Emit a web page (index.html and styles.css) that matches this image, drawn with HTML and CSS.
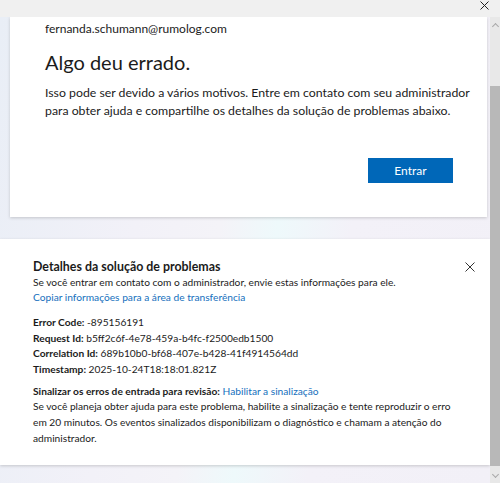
FILE: index.html
```html
<!DOCTYPE html>
<html lang="pt-BR">
<head>
    <meta charset="UTF-8">
    <meta name="viewport" content="width=device-width, initial-scale=1.0">
    <title>Entrar na sua conta</title>
    <link rel="stylesheet" href="styles.css">
</head>
<body>
    <div class="titlebar">
        <span class="win-close">
            <svg width="9" height="9" viewBox="0 0 9 9"><path d="M0.5 0.5 L8.5 8.5 M8.5 0.5 L0.5 8.5" stroke="#222" stroke-width="1" fill="none"/></svg>
        </span>
    </div>
    <div class="frame">
        <div class="viewport">
            <div class="card">
                <div class="identity">fernanda.schumann@rumolog.com</div>
                <h1>Algo deu errado.</h1>
                <p class="message">Isso pode ser devido a vários motivos. Entre em contato com seu administrador para obter ajuda e compartilhe os detalhes da solução de problemas abaixo.</p>
                <div class="actions">
                    <button class="primary-btn">Entrar</button>
                </div>
            </div>

            <div class="details">
                <div class="details-head">
                    <h2>Detalhes da solução de problemas</h2>
                    <button class="close-btn" title="Fechar">
                        <svg width="10" height="10" viewBox="0 0 10 10"><path d="M0.5 0.5 L9.5 9.5 M9.5 0.5 L0.5 9.5" stroke="#333" stroke-width="1" fill="none"/></svg>
                    </button>
                </div>
                <div>Se você entrar em contato com o administrador, envie estas informações para ele.</div>
                <a class="link" href="#">Copiar informações para a área de transferência</a>

                <div class="info">
                    <div><b>Error Code:</b> -895156191</div>
                    <div><b>Request Id:</b> b5ff2c6f-4e78-459a-b4fc-f2500edb1500</div>
                    <div><b>Correlation Id:</b> 689b10b0-bf68-407e-b428-41f4914564dd</div>
                    <div><b>Timestamp:</b> 2025-10-24T18:18:01.821Z</div>
                </div>

                <div class="flagging">
                    <div><b>Sinalizar os erros de entrada para revisão:</b> <a class="link" href="#">Habilitar a sinalização</a></div>
                    <div>Se você planeja obter ajuda para este problema, habilite a sinalização e tente reproduzir o erro em 20 minutos. Os eventos sinalizados disponibilizam o diagnóstico e chamam a atenção do administrador.</div>
                </div>
            </div>
        </div>

        <div class="scrollbar">
            <span class="arrow up"></span>
            <span class="thumb"></span>
            <span class="arrow down"></span>
        </div>
    </div>
</body>
</html>
```

FILE: styles.css
```css
body {
    margin: 0;
    width: 500px;
    height: 483px;
    overflow: hidden;
    font-family: Lato, "Noto Sans", sans-serif;
    color: #1b1b1b;
    background-color: #fff;
}
.titlebar {
    height: 17px;
    background-color: #f0f0f0;
    display: flex;
    justify-content: flex-end;
    align-items: flex-start;
}
.win-close {
    width: 9px;
    height: 9px;
    margin: 1px 11px 0 0;
    display: block;
}
.win-close svg {
    display: block;
}
.frame {
    display: flex;
    height: 466px;
}
.viewport {
    flex: 1;
    overflow: hidden;
    background: linear-gradient(100deg, #e9eef6 0%, #f2f1f8 30%, #f4f3f8 45%, #eef9fb 55%, #f3f1f8 68%, #f2f0f7 100%);
}
.card {
    background-color: #fff;
    margin: 0 3px 0 10px;
    height: 200px;
    box-sizing: border-box;
    padding: 3px 10px 0 35px;
    box-shadow: 0 1px 3px rgba(0, 0, 0, 0.18);
}
.identity {
    font-size: 12px;
    line-height: 18px;
}
h1 {
    font-size: 20px;
    font-weight: 400;
    margin: 11px 0 0;
    line-height: 26px;
}
.message {
    font-size: 12.3px;
    margin: 9px 0 0;
    line-height: 17.5px;
    text-wrap: balance;
}
.actions {
    display: flex;
    justify-content: flex-end;
    margin-top: 39px;
}
.primary-btn {
    background-color: #0067b8;
    color: #fff;
    border: none;
    width: 85px;
    height: 25px;
    font-family: inherit;
    font-size: 12px;
    padding: 0;
    margin-right: 24px;
}
.details {
    background-color: #fff;
    margin-top: 22px;
    height: 226px;
    box-sizing: border-box;
    padding: 20px 25px 0 33px;
    box-shadow: 0 1px 3px rgba(0, 0, 0, 0.18);
    font-size: 10.2px;
    line-height: 15.7px;
}
.details-head {
    display: flex;
    justify-content: space-between;
    align-items: center;
}
h2 {
    font-size: 12.4px;
    font-weight: 700;
    margin: 0;
    line-height: 15.5px;
}
.close-btn {
    background: none;
    border: none;
    padding: 0;
    width: 10px;
    height: 10px;
    margin-right: -10px;
}
.close-btn svg {
    display: block;
}
.link {
    color: #1570bd;
    text-decoration: none;
    display: inline-block;
}
.info {
    margin-top: 9px;
}
b {
    font-weight: 700;
}
.flagging {
    margin-top: 6px;
}
.scrollbar {
    width: 10px;
    background-color: #e8e8e8;
    display: flex;
    flex-direction: column;
    align-items: center;
}
.arrow {
    width: 4px;
    height: 4px;
    border-left: 1px solid #a8a8a8;
    border-top: 1px solid #a8a8a8;
    display: block;
}
.arrow.up {
    transform: rotate(45deg);
    margin: 7px 0 0;
}
.arrow.down {
    transform: rotate(225deg);
    margin: 0 0 6px;
}
.thumb {
    width: 10px;
    flex: 1;
    background-color: #b8b8b8;
    margin: 57px 0 6px;
}
```
